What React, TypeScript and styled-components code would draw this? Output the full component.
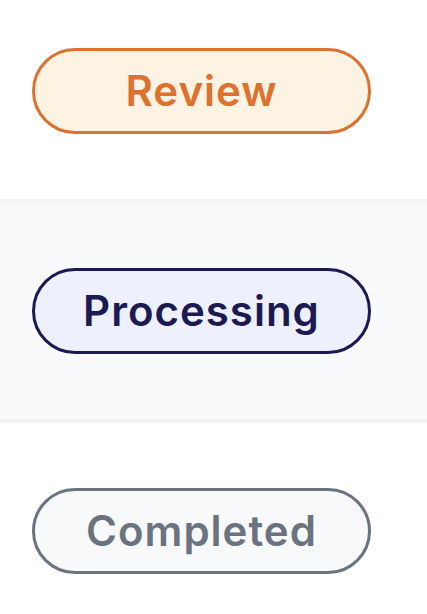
import React from 'react';
import styled, { createGlobalStyle } from 'styled-components';

const GlobalStyle = createGlobalStyle`
  html, body {
    margin: 0;
    padding: 0;
    background: #ffffff;
    font-family: Inter, "Noto Sans", sans-serif;
  }
`;

const List = styled.div`
  display: flex;
  flex-direction: column;
  margin-top: -17px;
`;

const Row = styled.div<{ $striped: boolean }>`
  display: flex;
  align-items: center;
  height: 216px;
  padding: 0 32px;
  box-sizing: content-box;
  background: ${p => (p.$striped ? '#f9fafb' : '#ffffff')};
  border-bottom: 4px solid #f3f4f6;
`;

type Tone = 'review' | 'processing' | 'completed';

const tones: Record<Tone, { fg: string; bg: string }> = {
  review: { fg: '#dd7130', bg: '#fdf3e3' },
  processing: { fg: '#1b1a52', bg: '#eef0fe' },
  completed: { fg: '#6b7280', bg: '#f8f9fb' },
};

const Pill = styled.span<{ $tone: Tone }>`
  display: flex;
  align-items: center;
  justify-content: center;
  box-sizing: border-box;
  width: 339px;
  height: 86px;
  border-radius: 43px;
  border: 3.5px solid ${p => tones[p.$tone].fg};
  background: ${p => tones[p.$tone].bg};
  color: ${p => tones[p.$tone].fg};
  font-size: 42px;
  font-weight: 600;
  letter-spacing: 1px;
  line-height: 1;
`;

const rows: { label: string; tone: Tone }[] = [
  { label: 'Review', tone: 'review' },
  { label: 'Processing', tone: 'processing' },
  { label: 'Completed', tone: 'completed' },
];

export default function App() {
  return (
    <>
      <GlobalStyle />
      <List>
        {rows.map((r, i) => (
          <Row key={r.label} $striped={i % 2 === 1}>
            <Pill $tone={r.tone}>{r.label}</Pill>
          </Row>
        ))}
      </List>
    </>
  );
}
